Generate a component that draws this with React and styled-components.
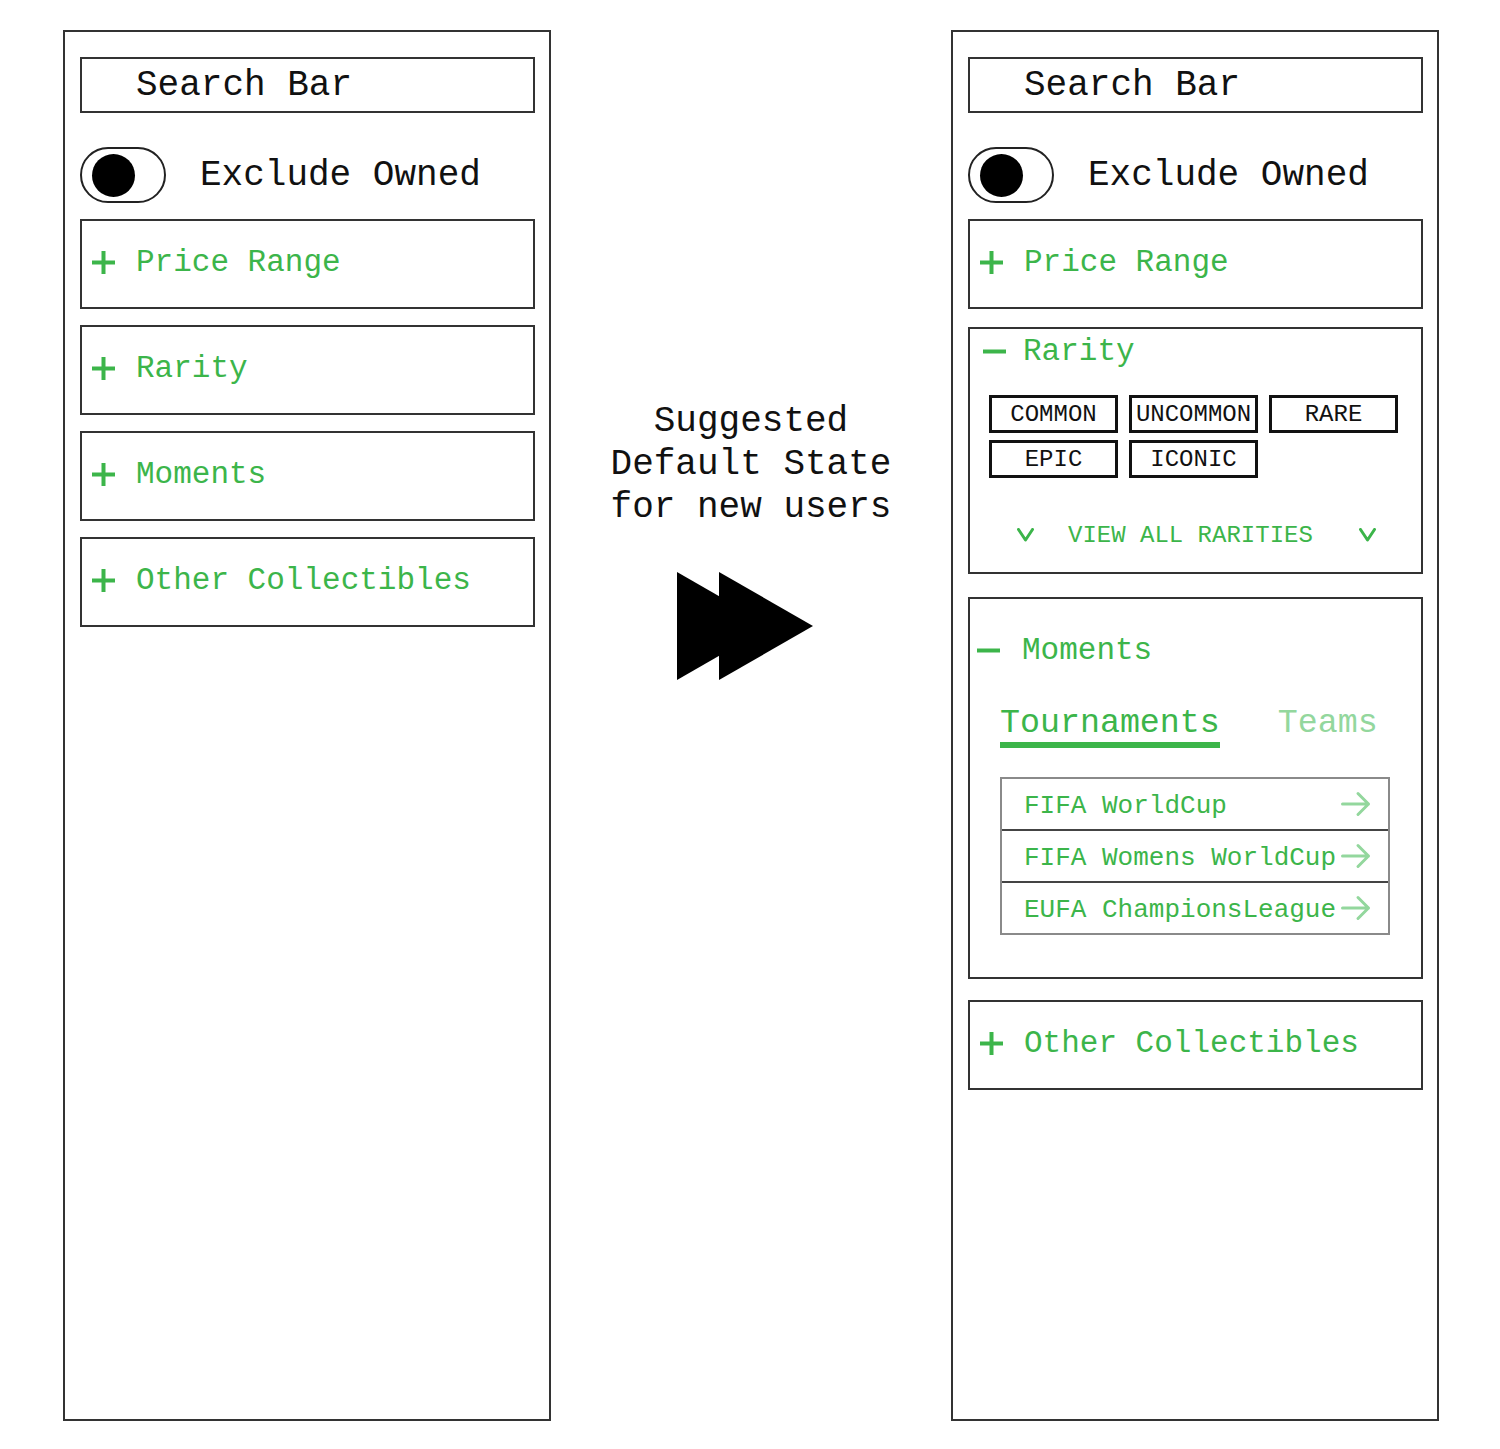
import React from 'react';
import styled, { createGlobalStyle } from 'styled-components';

const GREEN = '#3cb54a';
const LIGHT_GREEN = '#93d79d';
const INK = '#111';
const LINE = '#333';

const GlobalStyle = createGlobalStyle`
  html, body {
    margin: 0;
    background: #fff;
  }
  body {
    font-family: "Liberation Mono", "DejaVu Sans Mono", monospace;
    color: ${INK};
  }
  * { box-sizing: border-box; }
`;

const PlusIcon = () => (
  <svg width="23" height="23" viewBox="0 0 23 23">
    <path d="M11.5 0v23M0 11.5h23" stroke={GREEN} strokeWidth="4" />
  </svg>
);

const MinusIcon = () => (
  <svg width="23" height="23" viewBox="0 0 23 23">
    <path d="M0 11.5h23" stroke={GREEN} strokeWidth="4" />
  </svg>
);

const Chevron = () => (
  <svg width="17" height="14" viewBox="0 0 17 14">
    <path d="M1.5 1.5l7 10.5 7-10.5" fill="none" stroke={GREEN} strokeWidth="3" strokeLinecap="round" strokeLinejoin="round" />
  </svg>
);

const ArrowRight = () => (
  <svg width="30" height="26" viewBox="0 0 30 26">
    <path d="M1.5 13h26M17 2.5L27.5 13 17 23.5" fill="none" stroke={LIGHT_GREEN} strokeWidth="3" strokeLinecap="round" strokeLinejoin="round" />
  </svg>
);

const FastForward = () => (
  <svg width="137" height="108" viewBox="0 0 137 108">
    <polygon points="0,0 94,54 0,108" fill="#000" />
    <polygon points="42,0 136,54 42,108" fill="#000" />
  </svg>
);

const App = () => {
  const rarities = ['COMMON', 'UNCOMMON', 'RARE', 'EPIC', 'ICONIC'];
  const tournaments = ['FIFA WorldCup', 'FIFA Womens WorldCup', 'EUFA ChampionsLeague'];

  return (
    <>
      <GlobalStyle />
      <Page>
        <Panel>
          <SearchBar>Search Bar</SearchBar>
          <ToggleRow>
            <Toggle><Knob /></Toggle>
            <ToggleLabel>Exclude Owned</ToggleLabel>
          </ToggleRow>
          {['Price Range', 'Rarity', 'Moments', 'Other Collectibles'].map((label) => (
            <Collapsed key={label} $gap={16}>
              <Header $pl={10} $gap={21}>
                <PlusIcon />
                {label}
              </Header>
            </Collapsed>
          ))}
        </Panel>

        <Middle>
          <Note>
            Suggested<br />
            Default State<br />
            for new users
          </Note>
          <ArrowWrap>
            <FastForward />
          </ArrowWrap>
        </Middle>

        <Panel>
          <SearchBar>Search Bar</SearchBar>
          <ToggleRow>
            <Toggle><Knob /></Toggle>
            <ToggleLabel>Exclude Owned</ToggleLabel>
          </ToggleRow>
          <Collapsed $gap={16}>
            <Header $pl={10} $gap={21}>
              <PlusIcon />
              Price Range
            </Header>
          </Collapsed>

          <Expanded $gap={18} $pb={22}>
            <Header $pl={13} $gap={17} $mt={2}>
              <MinusIcon />
              Rarity
            </Header>
            <ChipGrid>
              {rarities.map((r) => (
                <Chip key={r}>{r}</Chip>
              ))}
            </ChipGrid>
            <ViewAll>
              <Chevron />
              <ViewAllText>VIEW ALL RARITIES</ViewAllText>
              <Chevron />
            </ViewAll>
          </Expanded>

          <Expanded $gap={23} $pb={42}>
            <Header $pl={7} $gap={22} $mt={31}>
              <MinusIcon />
              Moments
            </Header>
            <Tabs>
              <Tab $active>Tournaments</Tab>
              <Tab>Teams</Tab>
            </Tabs>
            <List>
              {tournaments.map((t) => (
                <ListRow key={t}>
                  <span>{t}</span>
                  <ArrowRight />
                </ListRow>
              ))}
            </List>
          </Expanded>

          <Collapsed $gap={21}>
            <Header $pl={10} $gap={21}>
              <PlusIcon />
              Other Collectibles
            </Header>
          </Collapsed>
        </Panel>
      </Page>
    </>
  );
};

const Page = styled.div`
  display: flex;
  align-items: flex-start;
  min-height: 1449px;
  padding: 30px 0 0 63px;
`;

const Panel = styled.div`
  width: 488px;
  height: 1391px;
  border: 2px solid ${LINE};
  padding: 25px 14px 0 15px;
  display: flex;
  flex-direction: column;
`;

const SearchBar = styled.div`
  height: 56px;
  border: 2px solid ${LINE};
  padding-left: 54px;
  display: flex;
  align-items: center;
  font-size: 36px;
  color: ${INK};
`;

const ToggleRow = styled.div`
  margin-top: 34px;
  height: 56px;
  display: flex;
  align-items: center;
  gap: 34px;
`;

const Toggle = styled.div`
  width: 86px;
  height: 56px;
  border: 2px solid #222;
  border-radius: 28px;
  padding-left: 10px;
  display: flex;
  align-items: center;
`;

const Knob = styled.div`
  width: 43px;
  height: 43px;
  border-radius: 50%;
  background: #000;
`;

const ToggleLabel = styled.span`
  font-size: 36px;
  color: ${INK};
`;

const Collapsed = styled.div`
  margin-top: ${({ $gap }) => $gap}px;
  height: 90px;
  border: 2px solid ${LINE};
  display: flex;
  align-items: center;
  padding-bottom: 4px;
`;

const Expanded = styled.div`
  margin-top: ${({ $gap }) => $gap}px;
  border: 2px solid ${LINE};
  padding-bottom: ${({ $pb }) => $pb}px;
  display: flex;
  flex-direction: column;
`;

const Header = styled.div`
  height: 40px;
  margin-top: ${({ $mt }) => $mt || 0}px;
  padding-left: ${({ $pl }) => $pl}px;
  display: flex;
  align-items: center;
  gap: ${({ $gap }) => $gap}px;
  font-size: 31px;
  color: ${GREEN};

  svg {
    flex-shrink: 0;
  }
`;

const ChipGrid = styled.div`
  margin: 24px 0 0 19px;
  display: grid;
  grid-template-columns: repeat(3, 129px);
  column-gap: 11px;
  row-gap: 7px;
`;

const Chip = styled.div`
  height: 38px;
  border: 3px solid ${INK};
  display: flex;
  align-items: center;
  justify-content: center;
  font-size: 24px;
  color: ${INK};
`;

const ViewAll = styled.div`
  margin-top: 42px;
  height: 30px;
  padding-left: 47px;
  display: flex;
  align-items: center;
  color: ${GREEN};
  font-size: 24px;
`;

const ViewAllText = styled.span`
  margin: 0 46px 0 34px;
`;

const Tabs = styled.div`
  margin: 32px 0 0 30px;
  display: flex;
  gap: 58px;
`;

const Tab = styled.div`
  height: 46px;
  line-height: 42px;
  font-size: 33.3px;
  color: ${({ $active }) => ($active ? GREEN : LIGHT_GREEN)};
  border-bottom: 6px solid ${({ $active }) => ($active ? GREEN : 'transparent')};
`;

const List = styled.div`
  margin: 29px 0 0 30px;
  width: 390px;
  border: 2px solid #8a8a8a;
`;

const ListRow = styled.div`
  height: 50px;
  padding: 4px 17px 0 22px;
  display: flex;
  align-items: center;
  justify-content: space-between;
  font-size: 26px;
  color: ${GREEN};

  svg {
    margin-top: -4px;
  }

  & + & {
    height: 52px;
    border-top: 2px solid #444;
  }
`;

const Middle = styled.div`
  width: 400px;
  padding-top: 370px;
  display: flex;
  flex-direction: column;
  align-items: center;
`;

const Note = styled.div`
  font-size: 36px;
  line-height: 43px;
  text-align: center;
  color: ${INK};
`;

const ArrowWrap = styled.div`
  margin: 43px 12px 0 0;
  display: flex;
`;

export default App;
